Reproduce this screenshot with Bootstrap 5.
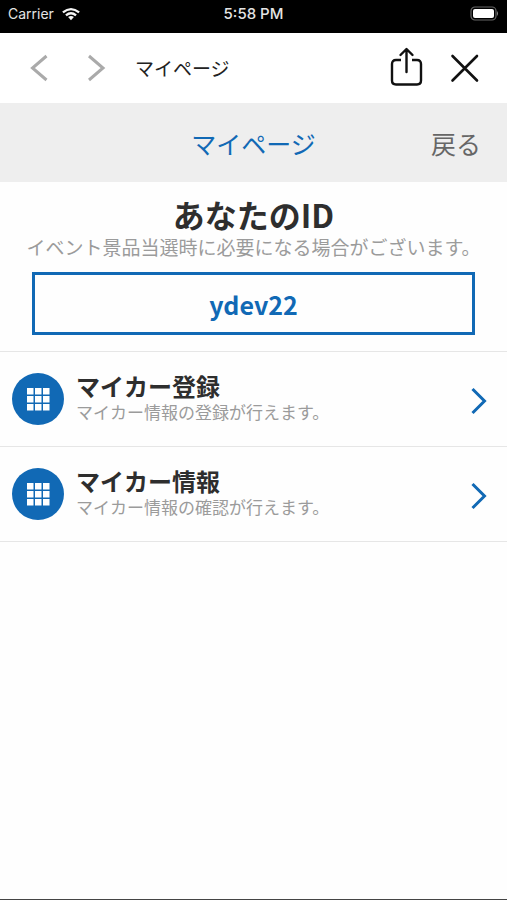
<!DOCTYPE html>
<html lang="ja">
<head>
<meta charset="utf-8">
<meta name="viewport" content="width=device-width, initial-scale=1">
<title>マイページ</title>
<link href="https://cdn.jsdelivr.net/npm/bootstrap@5.3.0/dist/css/bootstrap.min.css" rel="stylesheet">
<style>
  :root { --brand: #1169b5; --ink: #2e2e2e; --muted: #9b9b9b; }
  body { font-family: "Noto Sans CJK JP", sans-serif; color: var(--ink); border-bottom: 1px solid #444; background: #fefefe; }
  svg { display: block; flex: none; }
  .status-bar { height: 33px; padding: 0 8px 6px; background: #000; color: #e4e4e4; font: 14px/20px Inter, sans-serif; }
  .status-bar > * { flex: 1 1 0; }
  .status-time { font-size: 15px; font-weight: 500; }
  .browser-bar { height: 70px; padding: 0 26px; background: #fff; }
  .browser-title { font-size: 19px; line-height: 28px; color: #222; padding-left: 29px; }
  .icon-button { border: 0; padding: 0; background: none; color: #111; }
  .icon-button:disabled { color: #aaa; }
  .page-header { min-height: 79px; padding: 0 26px; background: #eee; font-size: 25px; line-height: 36px; display: grid; grid-template-columns: 1fr auto 1fr; }
  .page-title { font-size: 25px; line-height: 36px; font-weight: 400; color: var(--brand); grid-column: 2; }
  .back-link { color: #666; text-decoration: none; justify-self: end; }
  .id-section { padding: 13px 0 16px; }
  .id-heading { font-size: 32px; line-height: 38px; font-weight: 700; }
  .id-note { font-size: 19px; line-height: 28px; color: var(--muted); }
  .id-box { margin: 11px 32px 0; border: 3px solid var(--brand); color: var(--brand); font-size: 25px; line-height: 40px; padding: 9px 0 8px; font-weight: 700; }
  .menu { border-top: 1px solid #e6e6e6; }
  .menu-row { min-height: 95px; padding: 0 20px 0 12px; gap: 12px; border-bottom: 1px solid #e6e6e6; color: inherit; text-decoration: none; }
  .menu-text { padding-bottom: 3px; }
  .menu-title { font-size: 24px; line-height: 28px; font-weight: 700; }
  .menu-note { font-size: 17px; line-height: 24px; color: var(--muted); }
</style>
<script src="https://cdn.jsdelivr.net/npm/bootstrap@5.3.0/dist/js/bootstrap.bundle.min.js"></script>
</head>
<body class="min-vh-100">
  <div class="status-bar d-flex align-items-center">
    <div class="d-flex align-items-center gap-2">
      <span>Carrier</span>
      <svg width="18" height="14" viewBox="0 0 20 14" fill="none" stroke="#f4f4f4" stroke-width="2.6" aria-hidden="true">
        <path d="M1 5.200Q10-2 19 5.200"/><path d="M4.400 8.600Q10 3.800 15.600 8.600"/><path d="M10 14 6.800 10.400Q10 8 13.200 10.400Z" fill="#f4f4f4" stroke="none"/>
      </svg>
    </div>
    <div class="status-time text-center">5:58 PM</div>
    <div class="d-flex justify-content-end">
      <svg width="29" height="15" viewBox="0 0 29 15" aria-hidden="true">
        <rect x="1" y="1" width="25" height="13" rx="4" fill="none" stroke="#666" stroke-width="1.200"/><rect x="3" y="3" width="21" height="9" rx="2" fill="#fff"/><path d="M27 5q2 2.500 0 5Z" fill="#888"/>
      </svg>
    </div>
  </div>

  <nav class="browser-bar d-flex align-items-center" aria-label="ブラウザ">
    <button class="icon-button" type="button" disabled aria-label="前へ">
      <svg width="26" height="30" viewBox="0 0 26 30" fill="none" stroke="currentColor" stroke-width="3"><path d="M20.500 3 6.500 15 20.500 27"/></svg>
    </button>
    <button class="icon-button ms-4" type="button" disabled aria-label="次へ">
      <svg width="30" height="30" viewBox="0 0 30 30" fill="none" stroke="currentColor" stroke-width="3"><path d="M13 3 27 15 13 27"/></svg>
    </button>
    <span class="browser-title flex-grow-1">マイページ</span>
    <button class="icon-button" type="button" aria-label="共有">
      <svg width="36" height="42" viewBox="0 0 36 42" fill="none" stroke="currentColor" stroke-width="2.400" stroke-linecap="round" stroke-linejoin="round"><path d="M12 13H7Q3 13 3 17V33.500Q3 37.500 7 37.500H28Q32 37.500 32 33.500V17Q32 13 28 13H23" stroke-linecap="butt"/><path d="M17.500 25V2.500M11.500 8 17.500 2 23.500 8"/></svg>
    </button>
    <button class="icon-button ms-4" type="button" aria-label="閉じる">
      <svg width="32" height="30" viewBox="0 0 32 30" fill="none" stroke="currentColor" stroke-width="2.600" stroke-linecap="round"><path d="M3.500 3 28 27.500M28 3 3.500 27.500"/></svg>
    </button>
  </nav>

  <header class="page-header align-items-center">
    <h1 class="page-title mb-0">マイページ</h1>
    <a class="back-link" href="#">戻る</a>
  </header>

  <main>
    <section class="id-section text-center">
      <h2 class="id-heading mb-0">あなたのID</h2>
      <p class="id-note mb-0">イベント景品当選時に必要になる場合がございます。</p>
      <div class="id-box">ydev22</div>
    </section>

    <div class="menu">
      <a class="menu-row d-flex align-items-center" href="#">
        <svg width="52" height="52" viewBox="0 0 52 52" aria-hidden="true"><circle cx="26" cy="26" r="26" fill="#1169b5"/><path fill="#fff" d="M15 15h6.500v6.500H15zM23 15h6.500v6.500H23zM31 15h6.500v6.500H31zM15 23h6.500v6.500H15zM23 23h6.500v6.500H23zM31 23h6.500v6.500H31zM15 31h6.500v6.500H15zM23 31h6.500v6.500H23zM31 31h6.500v6.500H31z"/></svg>
        <div class="menu-text flex-grow-1">
          <div class="menu-title">マイカー登録</div>
          <div class="menu-note">マイカー情報の登録が行えます。</div>
        </div>
        <svg width="16" height="32" viewBox="0 0 16 32" fill="none" stroke="#1169b5" stroke-width="3" aria-hidden="true"><path d="M1.500 6 13.500 18 1.500 30"/></svg>
      </a>
      <a class="menu-row d-flex align-items-center" href="#">
        <svg width="52" height="52" viewBox="0 0 52 52" aria-hidden="true"><circle cx="26" cy="26" r="26" fill="#1169b5"/><path fill="#fff" d="M15 15h6.500v6.500H15zM23 15h6.500v6.500H23zM31 15h6.500v6.500H31zM15 23h6.500v6.500H15zM23 23h6.500v6.500H23zM31 23h6.500v6.500H31zM15 31h6.500v6.500H15zM23 31h6.500v6.500H23zM31 31h6.500v6.500H31z"/></svg>
        <div class="menu-text flex-grow-1">
          <div class="menu-title">マイカー情報</div>
          <div class="menu-note">マイカー情報の確認が行えます。</div>
        </div>
        <svg width="16" height="32" viewBox="0 0 16 32" fill="none" stroke="#1169b5" stroke-width="3" aria-hidden="true"><path d="M1.500 6 13.500 18 1.500 30"/></svg>
      </a>
    </div>
  </main>
</body>
</html>
